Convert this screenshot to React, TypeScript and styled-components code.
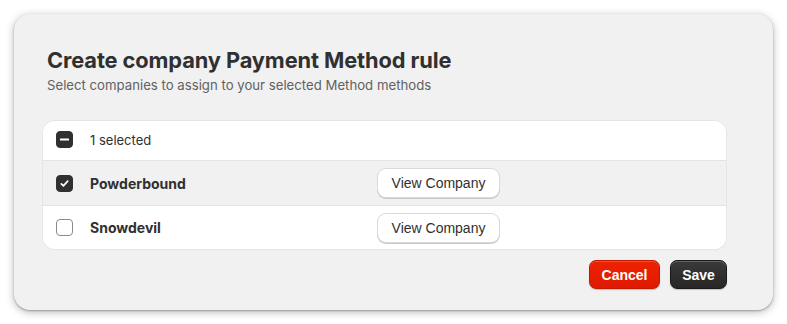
import React from "react";
import styled, { createGlobalStyle } from "styled-components";

const Global = createGlobalStyle`
  html, body { margin: 0; padding: 0; background: #ffffff; }
  body { font-family: Inter, "Noto Sans", sans-serif; -webkit-font-smoothing: antialiased; }
  * { box-sizing: border-box; }
`;

const Page = styled.div`
  padding: 14px;
  width: 787px;
  height: 324px;
`;

const Modal = styled.div`
  width: 759px;
  height: 296px;
  background: #f1f1f1;
  border-radius: 16px;
  box-shadow: 0 1px 2px rgba(0,0,0,0.25), 0 2px 8px rgba(0,0,0,0.28);
  padding: 32px 47px 0 29px;
  display: flex;
  flex-direction: column;
`;

const Header = styled.div`
  padding: 0 4px;
  display: flex;
  flex-direction: column;
  gap: 2px;
`;

const Title = styled.h1`
  margin: 0;
  font-size: 21.8px;
  line-height: 28px;
  font-weight: 700;
  color: #303030;
  letter-spacing: -0.1px;
`;

const Subtitle = styled.p`
  margin: 0;
  font-size: 13.2px;
  line-height: 18px;
  color: #616161;
`;

const Card = styled.div`
  margin-top: 27px;
  background: #ffffff;
  border-radius: 12px;
  box-shadow: 0 0 0 1px #e6e6e6, 0 1px 1px rgba(0,0,0,0.08);
  overflow: hidden;
`;

const Row = styled.div<{ $selected?: boolean; $height: number; $lift?: number }>`
  display: grid;
  grid-template-columns: 34px 288px 1fr;
  align-items: center;
  height: ${(p) => p.$height}px;
  padding-left: 13px;
  padding-bottom: ${(p) => p.$lift ?? 0}px;
  background: ${(p) => (p.$selected ? "#f1f1f1" : "#ffffff")};
  & + & { border-top: 1px solid #e3e3e3; }
`;

const Box = styled.span<{ $on?: boolean }>`
  width: 17px;
  height: 17px;
  border-radius: 4px;
  display: inline-flex;
  align-items: center;
  justify-content: center;
  background: ${(p) => (p.$on ? "#303030" : "#ffffff")};
  border: 1px solid ${(p) => (p.$on ? "#303030" : "#8a8a8a")};
`;

const Label = styled.span<{ $bold?: boolean }>`
  font-size: ${(p) => (p.$bold ? 14 : 13)}px;
  font-weight: ${(p) => (p.$bold ? 700 : 400)};
  color: #303030;
`;

const ViewButton = styled.button`
  width: 121px;
  height: 28px;
  border: none;
  border-radius: 8px;
  background: #ffffff;
  font-family: "Liberation Sans", Arial, sans-serif;
  font-size: 14px;
  color: #303030;
  box-shadow: 0 0 0 1px #d9d9d9, 0 1px 0 1px #c8c8c8;
  padding: 0;
`;

const Footer = styled.div`
  display: flex;
  justify-content: flex-end;
  gap: 10px;
  margin-top: 11px;
  margin-right: -1px;
`;

const ActionButton = styled.button<{ $tone: "red" | "dark"; $w: number }>`
  width: ${(p) => p.$w}px;
  height: 29px;
  border-radius: 7px;
  border: 1px solid ${(p) => (p.$tone === "red" ? "#c21a00" : "#1a1a1a")};
  background: ${(p) =>
    p.$tone === "red"
      ? "linear-gradient(#ee2200, #e01a00)"
      : "linear-gradient(#3a3a3a, #262626)"};
  box-shadow: inset 0 1px 0 rgba(255,255,255,0.2), 0 1px 1px rgba(0,0,0,0.2);
  color: #ffffff;
  font-family: "Liberation Sans", Arial, sans-serif;
  font-weight: 700;
  font-size: 14px;
  padding: 0;
`;

const Minus = () => (
  <svg width="11" height="11" viewBox="0 0 11 11">
    <rect x="1" y="4.5" width="9" height="2" rx="0.6" fill="#ffffff" />
  </svg>
);

const Check = () => (
  <svg width="11" height="11" viewBox="0 0 11 11">
    <path d="M2.3 5.8 L4.4 7.8 L8.7 3.2" fill="none" stroke="#ffffff" strokeWidth="1.7" strokeLinecap="round" strokeLinejoin="round" />
  </svg>
);

const companies = [
  { name: "Powderbound", selected: true },
  { name: "Snowdevil", selected: false },
];

export default function App() {
  return (
    <>
      <Global />
      <Page>
        <Modal>
          <Header>
            <Title>Create company Payment Method rule</Title>
            <Subtitle>Select companies to assign to your selected Method methods</Subtitle>
          </Header>
          <Card>
            <Row $height={39} $lift={2}>
              <Box $on><Minus /></Box>
              <Label>1 selected</Label>
            </Row>
            {companies.map((c, i) => (
              <Row key={c.name} $selected={c.selected} $height={i === 0 ? 45 : 44}>
                <Box $on={c.selected}>{c.selected && <Check />}</Box>
                <Label $bold>{c.name}</Label>
                <div><ViewButton>View Company</ViewButton></div>
              </Row>
            ))}
          </Card>
          <Footer>
            <ActionButton $tone="red" $w={71}>Cancel</ActionButton>
            <ActionButton $tone="dark" $w={57}>Save</ActionButton>
          </Footer>
        </Modal>
      </Page>
    </>
  );
}
